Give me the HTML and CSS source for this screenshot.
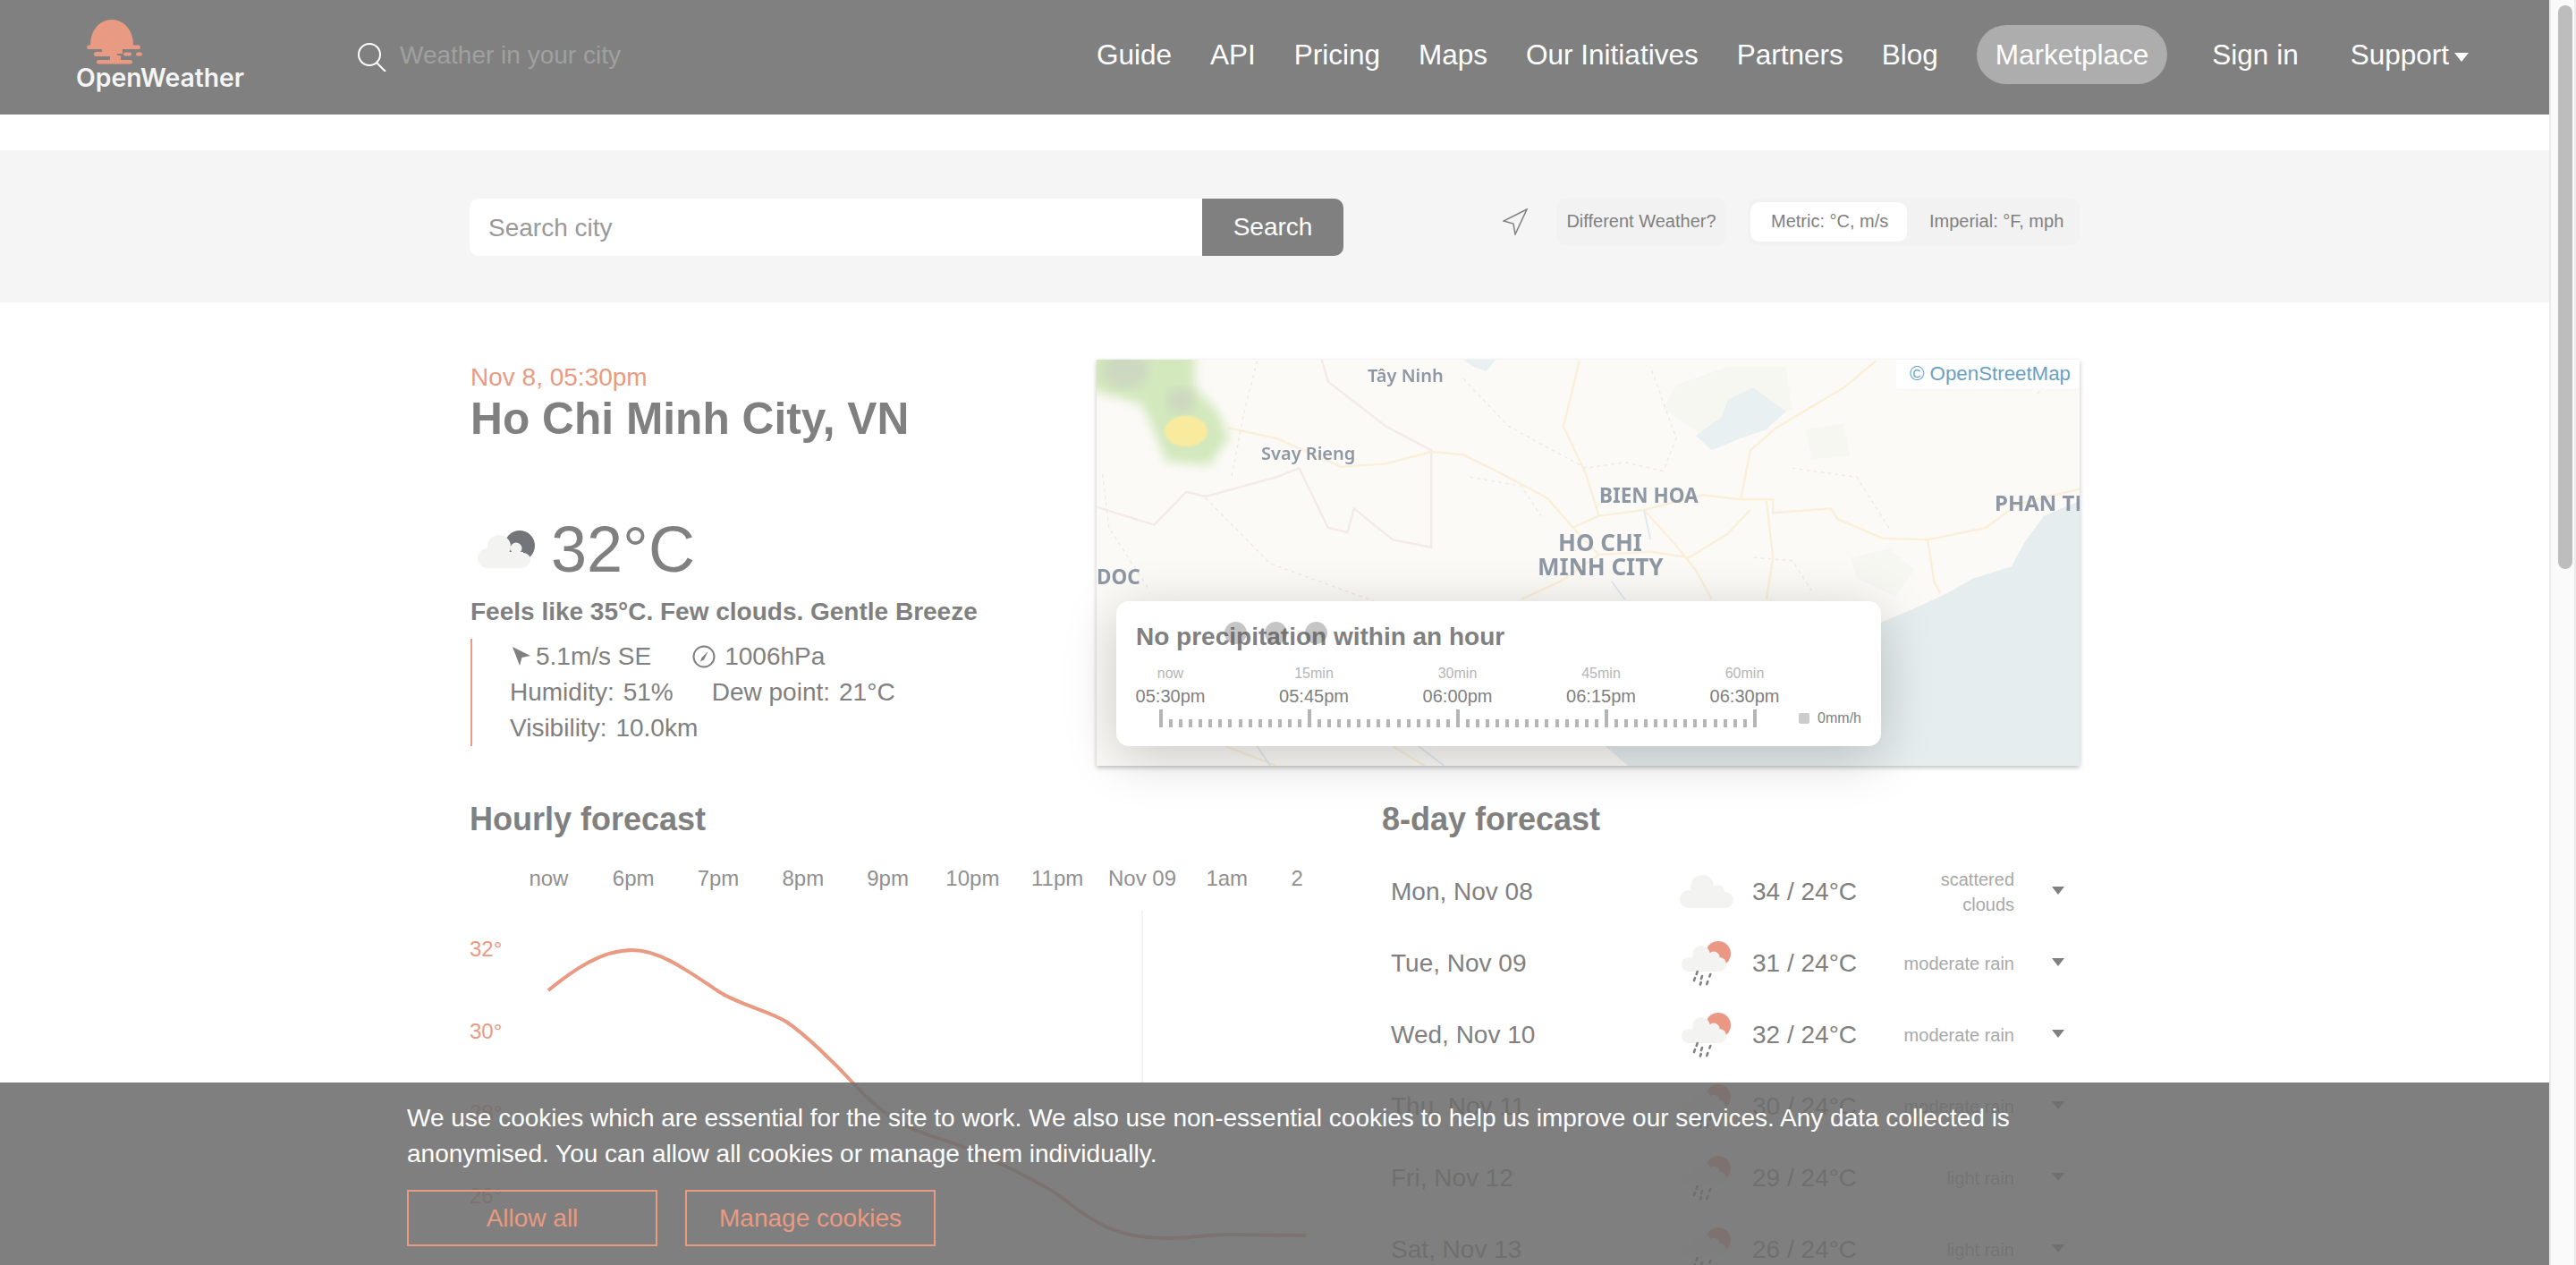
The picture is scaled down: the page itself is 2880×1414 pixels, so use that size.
FILE: index.html
```html
<!DOCTYPE html>
<html lang="en">
<head>
    <meta charset="UTF-8">
    <meta name="viewport" content="width=device-width, initial-scale=1.0">
    <title>OpenWeather</title>
    <link rel="stylesheet" href="styles.css">
</head>
<body>
    <svg class="defs" width="0" height="0">
        <symbol id="icon-rain" viewBox="-2 1 60 50">
            <circle class="sun" cx="41" cy="15" r="14"></circle>
            <g class="cloud">
                <circle cx="22" cy="16" r="10"></circle>
                <circle cx="36" cy="19" r="6.5"></circle>
                <circle cx="8" cy="27" r="8"></circle>
                <circle cx="42" cy="27" r="8"></circle>
                <rect x="8" y="20" width="34" height="15"></rect>
            </g>
            <path class="drops" d="M17.7 35l-1 3M15 42l-1 3M23 40l-1 3M21.7 47l-.8 2.5M32.3 38l-1 2.5M29.3 46l-1 3"></path>
        </symbol>
        <symbol id="icon-cloud" viewBox="0 0 60 50">
            <g class="cloud">
                <circle cx="25" cy="19" r="13"></circle>
                <circle cx="43" cy="24" r="7"></circle>
                <circle cx="10" cy="33" r="10"></circle>
                <circle cx="51" cy="34" r="9"></circle>
                <rect x="10" y="25" width="41" height="18"></rect>
            </g>
        </symbol>
    </svg>

    <div class="page">
        <div class="main">
            <header class="site-header">
                <a class="logo">
                    <svg class="logo-mark" width="64" height="50" viewBox="0 0 64 50">
                        <path d="M4 29C4 12 14 0 28 0C42 0 52 12 52 29Z"></path>
                        <rect x="0" y="28.5" width="60" height="4.5" rx="2.2"></rect>
                        <rect x="17" y="32" width="23" height="6"></rect>
                        <rect x="8" y="36" width="26" height="5" rx="2.5"></rect>
                        <rect x="41" y="36.5" width="9" height="4" rx="2"></rect>
                        <rect x="55" y="36.5" width="7" height="4" rx="2"></rect>
                        <rect x="26" y="40" width="12" height="6"></rect>
                        <rect x="11" y="45" width="40" height="4.5" rx="2.2"></rect>
                    </svg>
                    <span class="logo-text">OpenWeather</span>
                </a>
                <div class="site-search">
                    <svg class="site-search-icon" width="32" height="32" viewBox="0 0 32 32">
                        <circle cx="13" cy="13" r="12"></circle>
                        <path d="M21 22L31 32"></path>
                    </svg>
                    <input class="site-search-input" placeholder="Weather in your city">
                </div>
                <nav class="site-nav">
                    <a>Guide</a>
                    <a>API</a>
                    <a>Pricing</a>
                    <a>Maps</a>
                    <a>Our Initiatives</a>
                    <a>Partners</a>
                    <a>Blog</a>
                    <a class="nav-pill">Marketplace</a>
                    <a class="nav-signin">Sign in</a>
                    <a class="nav-support">Support<span class="nav-caret"></span></a>
                </nav>
            </header>

            <section class="toolbar">
                <div class="wrap toolbar-row">
                    <form class="city-search">
                        <input class="city-input" placeholder="Search city">
                        <button class="city-button" type="button">Search</button>
                    </form>
                    <div class="toolbar-controls">
                        <svg class="locate-icon" width="28" height="30" viewBox="0 0 28 30">
                            <path d="M27 1L1 14L12 17L14 29Z"></path>
                        </svg>
                        <div class="chip">Different Weather?</div>
                        <div class="units">
                            <div class="unit unit-active">Metric: °C, m/s</div>
                            <div class="unit">Imperial: °F, mph</div>
                        </div>
                    </div>
                </div>
            </section>

            <section class="wrap current">
                <div class="current-info">
                    <div class="current-date">Nov 8, 05:30pm</div>
                    <h1 class="current-city">Ho Chi Minh City, VN</h1>
                    <div class="current-temp">
                        <svg width="64" height="42" viewBox="0 0 64 42">
                            <circle class="moon" cx="47" cy="17" r="17"></circle>
                            <g class="cloud">
                                <circle cx="24" cy="18" r="13"></circle>
                                <circle cx="43" cy="20" r="6.5"></circle>
                                <circle cx="11" cy="31" r="11"></circle>
                                <circle cx="51" cy="33" r="8"></circle>
                                <rect x="11" y="24" width="40" height="18"></rect>
                            </g>
                        </svg>
                        <span>32°C</span>
                    </div>
                    <div class="current-summary">Feels like 35°C. Few clouds. Gentle Breeze</div>
                    <div class="current-details">
                        <div class="detail-row">
                            <span class="detail-item">
                                <svg class="wind-icon" width="21" height="22" viewBox="0 0 21 22"><path d="M0 0L20 10L10.5 12L8 21Z"></path></svg>
                                5.1m/s SE
                            </span>
                            <span class="detail-item">
                                <svg class="pressure-icon" width="26" height="26" viewBox="0 0 26 26">
                                    <circle cx="13" cy="13" r="11.5"></circle>
                                    <path d="M17.5 7.5L10.5 14L9 18.5L13 16.5Z"></path>
                                </svg>
                                1006hPa
                            </span>
                        </div>
                        <div class="detail-row detail-row-text">
                            <span><span class="detail-label">Humidity:</span>51%</span>
                            <span><span class="detail-label">Dew point:</span>21°C</span>
                        </div>
                        <div class="detail-row detail-row-text">
                            <span><span class="detail-label">Visibility:</span>10.0km</span>
                        </div>
                    </div>
                </div>

                <div class="map">
                    <svg class="map-canvas" width="1099" height="454" viewBox="0 0 1099 454">
                        <defs>
                            <filter id="soft"><feGaussianBlur stdDeviation="6"></feGaussianBlur></filter>
                            <filter id="soft-small"><feGaussianBlur stdDeviation="1"></feGaussianBlur></filter>
                            <filter id="soft-text"><feGaussianBlur stdDeviation="0.5"></feGaussianBlur></filter>
                        </defs>
                        <rect class="map-land" width="1099" height="454"></rect>
                        <g transform="translate(-15 -12) scale(.7207 .3333)" filter="url(#soft-text)">
                            <path class="map-green" d="M920 120L1000 60L1090 60L1100 200L1040 280L960 290L900 200Z"></path>
                            <path class="map-green" d="M1120 270L1180 250L1190 360L1130 370Z"></path>
                            <path class="map-green" d="M1190 700L1250 670L1290 740L1260 830L1200 770Z"></path>
                            <path class="map-sea" d="M1546 510L1490 560L1460 650L1440 730L1380 770L1340 820L1290 870L1240 915L1000 1200L810 1332L845 1398L1546 1398Z"></path>
                            <path class="map-lake" d="M1000 170L1040 130L1090 210L1060 270L1020 300L975 340L950 290L990 230Z"></path>
                            <path class="map-lake" d="M590 36L640 36L625 75L605 60Z"></path>
                            <path class="map-border" d="M21 530L110 590L160 480L190 495L300 430L335 400L380 600L410 615L420 535L480 640L540 665L540 340L470 260L380 110L370 36"></path>
                            <path class="map-dash" d="M270 40L250 210L230 430M190 500L290 720L450 845M600 430L680 460L710 560M590 100L660 260L780 400L840 380L900 410L920 300L880 60M1100 400L1200 430L1250 600M1040 700L1100 710L1130 810M1480 150L1520 60M30 420L40 600L100 800"></path>
                            <path class="map-road" d="M225 265L300 300L400 395L470 385L540 345L590 355L650 420L720 500L760 600L800 690M770 40L745 260L780 420L800 560L870 540L960 490L1020 505L1070 505L1070 550L1160 535L1170 570L1240 635L1310 640L1400 600L1450 520L1546 470M870 540L920 660L950 740L975 840M1020 505L1035 340L1075 265L1180 130L1230 40M1060 510L1070 700L1060 840M1035 540L1000 620L940 700L880 680L800 690L740 780L680 840M1310 640L1320 780L1330 820M800 560L760 600M480 1332L530 1398M220 1332L300 1398"></path>
                            <path class="map-river" d="M870 540L880 640M820 780L840 840M520 1332L560 1398M270 1332L290 1398"></path>
                        </g>
                        <g>
                            <path class="radar-outer" filter="url(#soft)" d="M-10 -10L110 -10L110 31L136 58L148 88L126 118L78 114L60 71L50 50L-10 33Z"></path>
                            <ellipse class="radar-mid" filter="url(#soft)" cx="32" cy="12" rx="26" ry="20"></ellipse>
                            <ellipse class="radar-mid" filter="url(#soft)" cx="94" cy="46" rx="16" ry="14"></ellipse>
                            <ellipse class="radar-core" filter="url(#soft-small)" cx="100" cy="80" rx="24" ry="17"></ellipse>
                        </g>
                        <g class="map-labels" filter="url(#soft-text)">
                            <text class="map-label-small" x="303" y="25">Tây Ninh</text>
                            <text class="map-label-small" x="184" y="112">Svay Rieng</text>
                            <text class="map-label-mid" x="562" y="160">BIEN HOA</text>
                            <text x="1004" y="169">PHAN TH</text>
                            <text class="map-label-city" x="516" y="214">HO CHI</text>
                            <text class="map-label-city" x="493" y="241">MINH CITY</text>
                            <text class="map-label-mid" x="0" y="251">DOC</text>
                        </g>
                    </svg>
                    <div class="map-credit">© OpenStreetMap</div>
                    <div class="rain-card">
                        <h3 class="rain-title">No precipitation within an hour</h3>
                        <div class="rain-dots"><span></span><span></span><span></span></div>
                        <div class="rain-times">
                            <div class="rain-time"><small>now</small>05:30pm</div>
                            <div class="rain-time"><small>15min</small>05:45pm</div>
                            <div class="rain-time"><small>30min</small>06:00pm</div>
                            <div class="rain-time"><small>45min</small>06:15pm</div>
                            <div class="rain-time"><small>60min</small>06:30pm</div>
                        </div>
                        <div class="rain-bottom">
                            <div class="rain-ticks">
                                <i class="big"></i><i></i><i></i><i></i><i></i><i></i><i></i><i></i><i></i><i></i><i></i><i></i><i></i><i></i><i></i>
                                <i class="big"></i><i></i><i></i><i></i><i></i><i></i><i></i><i></i><i></i><i></i><i></i><i></i><i></i><i></i><i></i>
                                <i class="big"></i><i></i><i></i><i></i><i></i><i></i><i></i><i></i><i></i><i></i><i></i><i></i><i></i><i></i><i></i>
                                <i class="big"></i><i></i><i></i><i></i><i></i><i></i><i></i><i></i><i></i><i></i><i></i><i></i><i></i><i></i><i></i>
                                <i class="big"></i>
                            </div>
                            <div class="rain-legend"><span class="rain-swatch"></span>0mm/h</div>
                        </div>
                    </div>
                </div>
            </section>

            <section class="wrap forecasts">
                <div class="hourly">
                    <h2 class="section-title">Hourly forecast</h2>
                    <div class="hours">
                        <span>now</span><span>6pm</span><span>7pm</span><span>8pm</span><span>9pm</span><span>10pm</span><span>11pm</span><span>Nov 09</span><span>1am</span><span class="hours-last">2</span>
                    </div>
                    <svg class="chart" width="976" height="400" viewBox="525 995 976 400">
                        <path class="chart-grid" d="M1277 1016V1395"></path>
                        <text x="525" y="1068">32°</text>
                        <text x="525" y="1160">30°</text>
                        <text x="525" y="1251">28°</text>
                        <text x="525" y="1344">26°</text>
                        <path class="chart-line" d="M613 1106C640 1084 672 1061 707 1061C738 1061 770 1085 803 1107C828 1123 858 1128 879 1141C900 1155 932 1186 956 1212C975 1233 995 1250 1023 1262C1045 1271 1065 1275 1087 1285C1120 1300 1150 1315 1176 1330C1205 1348 1230 1383 1303 1383C1330 1383 1350 1379 1374 1379L1460 1380"></path>
                    </svg>
                </div>
                <div class="daily">
                    <h2 class="section-title">8-day forecast</h2>
                    <ul class="day-list">
                        <li class="day">
                            <span>Mon, Nov 08</span>
                            <svg width="60" height="50"><use href="#icon-cloud"></use></svg>
                            <span class="day-temp">34 / 24°C</span>
                            <span class="day-desc">scattered clouds</span>
                            <span class="day-caret"></span>
                        </li>
                        <li class="day">
                            <span>Tue, Nov 09</span>
                            <svg width="60" height="50"><use href="#icon-rain"></use></svg>
                            <span class="day-temp">31 / 24°C</span>
                            <span class="day-desc">moderate rain</span>
                            <span class="day-caret"></span>
                        </li>
                        <li class="day">
                            <span>Wed, Nov 10</span>
                            <svg width="60" height="50"><use href="#icon-rain"></use></svg>
                            <span class="day-temp">32 / 24°C</span>
                            <span class="day-desc">moderate rain</span>
                            <span class="day-caret"></span>
                        </li>
                        <li class="day">
                            <span>Thu, Nov 11</span>
                            <svg width="60" height="50"><use href="#icon-rain"></use></svg>
                            <span class="day-temp">30 / 24°C</span>
                            <span class="day-desc">moderate rain</span>
                            <span class="day-caret"></span>
                        </li>
                        <li class="day">
                            <span>Fri, Nov 12</span>
                            <svg width="60" height="50"><use href="#icon-rain"></use></svg>
                            <span class="day-temp">29 / 24°C</span>
                            <span class="day-desc">light rain</span>
                            <span class="day-caret"></span>
                        </li>
                        <li class="day">
                            <span>Sat, Nov 13</span>
                            <svg width="60" height="50"><use href="#icon-rain"></use></svg>
                            <span class="day-temp">26 / 24°C</span>
                            <span class="day-desc">light rain</span>
                            <span class="day-caret"></span>
                        </li>
                    </ul>
                </div>
            </section>

            <div class="cookies">
                <p class="cookies-text">We use cookies which are essential for the site to work. We also use non-essential cookies to help us improve our services. Any data collected is anonymised. You can allow all cookies or manage them individually.</p>
                <div class="cookies-actions">
                    <button class="cookies-button" type="button">Allow all</button>
                    <button class="cookies-button" type="button">Manage cookies</button>
                </div>
            </div>
        </div>

        <div class="scrollbar"><div class="scrollbar-thumb"></div></div>
    </div>
</body>
</html>
```

FILE: styles.css
```css
* {
    box-sizing: border-box;
}
html, body {
    margin: 0;
    height: 100%;
    overflow: hidden;
}
body {
    font-family: "Liberation Sans", Arial, sans-serif;
    color: #808080;
    background: #fff;
}
input, button {
    font-family: inherit;
}
.defs {
    position: absolute;
}
.page {
    display: flex;
    height: 100vh;
}
.main {
    position: relative;
    flex: 1;
    min-width: 0;
    overflow: hidden;
}
.wrap {
    width: 1800px;
    margin: 0 auto;
}

/* scrollbar */
.scrollbar {
    flex: none;
    width: 30px;
    padding: 6px 6px 0 8px;
    background: #fafafa;
    border-left: 2px solid #ebebeb;
    border-right: 2px solid #ebebeb;
}
.scrollbar-thumb {
    width: 16px;
    height: 630px;
    background: #bdbdbd;
    border-radius: 8px;
}

/* header */
.site-header {
    display: flex;
    align-items: flex-start;
    height: 128px;
    padding: 22px 90px 0 85px;
    background: #808080;
    color: #fff;
}
.logo {
    display: flex;
    flex-direction: column;
    width: 186px;
}
.logo-mark {
    margin-left: 12px;
    fill: #e99a82;
}
.logo-text {
    margin-top: -2px;
    font-family: Inter, "Noto Sans", sans-serif;
    font-size: 28.3px;
    font-weight: 600;
    line-height: 34px;
    color: #f5f5f5;
    white-space: nowrap;
}
.site-search {
    display: flex;
    align-items: flex-start;
    gap: 15px;
    margin: 26px 0 0 129px;
}
.site-search-icon {
    fill: none;
    stroke: #fff;
    stroke-width: 2;
}
.site-search-input {
    width: 300px;
    height: 40px;
    margin-top: -6px;
    padding: 0;
    border: 0;
    background: none;
    font-size: 28px;
}
.site-search-input::placeholder {
    color: #a0a0a0;
}
.site-nav {
    display: flex;
    gap: 43px;
    margin-left: auto;
    margin-top: 6px;
    font-size: 31.5px;
    line-height: 66px;
    white-space: nowrap;
}
.nav-pill {
    margin: 0 7px 0 0;
    padding: 0 21px;
    background: #adadad;
    border-radius: 33px;
}
.nav-support {
    display: flex;
    align-items: center;
    margin-left: 15px;
}
.nav-caret {
    width: 0;
    height: 0;
    margin: 6px 0 0 6px;
    border-left: 8px solid transparent;
    border-right: 8px solid transparent;
    border-top: 10px solid #fff;
}

/* search band */
.toolbar {
    height: 170px;
    margin-top: 40px;
    padding-top: 54px;
    background: #f5f5f5;
}
.toolbar-row {
    display: flex;
    justify-content: space-between;
}
.city-search {
    display: flex;
    width: 977px;
    height: 64px;
}
.city-input {
    flex: 1;
    min-width: 0;
    padding: 1px 21px 0;
    border: 0;
    border-radius: 10px 0 0 10px;
    background: #fff;
    font-size: 28px;
}
.city-input::placeholder {
    color: #999;
}
.city-button {
    width: 158px;
    border: 0;
    border-radius: 0 10px 10px 0;
    background: #808080;
    color: #fff;
    font-size: 28px;
}
.toolbar-controls {
    display: flex;
    align-items: flex-start;
    font-size: 20px;
}
.locate-icon {
    margin: 11px 32px 0 0;
    fill: none;
    stroke: #808080;
    stroke-width: 1.5;
}
.chip {
    width: 190px;
    height: 52px;
    margin-right: 24px;
    background: #f2f2f2;
    border-radius: 10px;
    line-height: 50px;
    text-align: center;
}
.units {
    display: flex;
    width: 371px;
    height: 52px;
    padding: 4px 3px;
    background: #f2f2f2;
    border-radius: 10px;
}
.unit {
    flex: 1;
    padding-left: 23px;
    line-height: 42px;
    white-space: nowrap;
}
.unit-active {
    flex: none;
    width: 175px;
    background: #fff;
    border-radius: 10px;
}
.unit-active + .unit {
    padding-left: 25px;
}

/* current weather */
.current {
    display: flex;
    justify-content: space-between;
    padding-top: 64px;
}
.current-info {
    width: 699px;
    padding: 4px 0 0 1px;
}
.current-date {
    font-size: 28px;
    line-height: 32px;
    color: #e99a82;
}
.current-city {
    margin: 2px 0 78px;
    font-size: 49.7px;
    line-height: 56px;
}
.current-temp {
    display: flex;
    align-items: center;
    gap: 18px;
    padding-left: 8px;
    font-size: 72px;
    line-height: 80px;
}
.moon {
    fill: #74757a;
}
.cloud {
    fill: #f3f3f2;
}
.sun {
    fill: #ea9784;
}
.drops {
    fill: none;
    stroke: #808080;
    stroke-width: 2.5;
    stroke-linecap: round;
}
.current-summary {
    margin: 14px 0;
    font-size: 28px;
    font-weight: bold;
    line-height: 32px;
}
.current-details {
    padding-left: 42px;
    border-left: 2px solid #e99a82;
    font-size: 28px;
    line-height: 40px;
}
.detail-row {
    display: flex;
    gap: 46px;
    padding-left: 3px;
}
.detail-row-text {
    gap: 43px;
    padding-left: 0;
}
.detail-item {
    display: flex;
    align-items: center;
}
.wind-icon {
    margin-right: 5px;
    fill: #808080;
}
.pressure-icon {
    margin-right: 10px;
}
.pressure-icon circle {
    fill: none;
    stroke: #808080;
    stroke-width: 2;
}
.pressure-icon path {
    fill: #808080;
}
.detail-label {
    margin-right: 10px;
}

/* map */
.map {
    position: relative;
    flex: none;
    width: 1099px;
    height: 454px;
    box-shadow: 0 2px 5px rgba(0, 0, 0, 0.25);
}
.map-canvas {
    display: block;
}
.map-land {
    fill: #fcfaf7;
}
.map-sea {
    fill: #e6edef;
}
.map-lake {
    fill: #e9f0f2;
}
.map-green {
    fill: #f7f7f2;
}
.map-road, .map-border, .map-dash, .map-river {
    fill: none;
    vector-effect: non-scaling-stroke;
}
.map-road {
    stroke: #faf0da;
    stroke-width: 2.5;
}
.map-border {
    stroke: #f3ebe9;
    stroke-width: 2.5;
}
.map-dash {
    stroke: #eeeae7;
    stroke-width: 1.5;
    stroke-dasharray: 4 4;
}
.map-river {
    stroke: #e0eaee;
    stroke-width: 2;
}
.radar-outer {
    fill: #d3e8bd;
}
.radar-mid {
    fill: #cdd8c0;
}
.radar-core {
    fill: #f9eb9e;
}
.map-labels text {
    font-family: "Noto Sans", sans-serif;
    font-size: 24px;
    font-weight: 700;
    fill: #8d98a4;
}
.map-labels .map-label-small {
    font-size: 20px;
    font-weight: 600;
}
.map-labels .map-label-mid {
    font-size: 22.5px;
}
.map-labels .map-label-city {
    font-size: 26px;
}
.map-credit {
    position: absolute;
    top: 0;
    right: 0;
    padding: 0 10px 0 15px;
    background: #fff;
    color: #6a9fc4;
    font-size: 22.3px;
    line-height: 32px;
}

/* rain card */
.rain-card {
    position: absolute;
    left: 22px;
    top: 270px;
    width: 855px;
    height: 162px;
    padding: 24px 22px 0;
    background: #fff;
    border-radius: 14px;
    box-shadow: 0 12px 60px rgba(0, 0, 0, 0.2);
}
.rain-title {
    margin: 0 0 15px;
    font-size: 28px;
    line-height: 32px;
}
.rain-dots {
    position: absolute;
    left: 121px;
    top: 23px;
    display: flex;
    gap: 20px;
}
.rain-dots span {
    width: 25px;
    height: 25px;
    background: rgba(90, 90, 90, 0.35);
    border-radius: 50%;
}
.rain-times {
    display: flex;
    gap: 83.5px;
}
.rain-time {
    display: flex;
    flex-direction: column;
    align-items: center;
    width: 77px;
    font-size: 20px;
    line-height: 24px;
    white-space: nowrap;
}
.rain-time small {
    font-size: 16px;
    line-height: 20px;
    color: #b5b5b5;
    margin-bottom: 3px;
}
.rain-bottom {
    display: flex;
    align-items: center;
    margin-top: 3px;
    padding-left: 26px;
}
.rain-ticks {
    display: flex;
    align-items: flex-end;
    justify-content: space-between;
    width: 668px;
    height: 20px;
}
.rain-ticks i {
    width: 4px;
    height: 9px;
    background: #b5b5b5;
}
.rain-ticks .big {
    height: 20px;
}
.rain-legend {
    display: flex;
    align-items: center;
    gap: 9px;
    margin-left: auto;
    font-size: 16px;
    white-space: nowrap;
}
.rain-swatch {
    width: 12px;
    height: 12px;
    background: #ccc;
    border-radius: 2px;
}

/* forecasts */
.forecasts {
    display: flex;
    justify-content: space-between;
    padding-top: 40px;
}
.hourly {
    width: 977px;
}
.daily {
    width: 780px;
}
.section-title {
    margin: 0;
    font-size: 36px;
    line-height: 40px;
}
.hours {
    display: flex;
    margin-top: 32px;
    padding-left: 41px;
    font-size: 24px;
    line-height: 28px;
    color: #909090;
    white-space: nowrap;
}
.hours span {
    width: 94.8px;
    text-align: center;
}
.hours .hours-last {
    width: 62px;
}
.chart {
    display: block;
}
.chart text {
    font-size: 24px;
    fill: #e99a82;
}
.chart-grid {
    stroke: #f2f2f2;
    stroke-width: 2;
}
.chart-line {
    fill: none;
    stroke: #e99a82;
    stroke-width: 4;
}
.day-list {
    margin: 21px 0 0;
    padding: 0 0 0 10px;
    list-style: none;
}
.day {
    display: grid;
    grid-template-columns: 323px 60px 184px 130px 15px;
    align-items: center;
    height: 80px;
    font-size: 28px;
}
.day-temp {
    padding-left: 21px;
}
.day-temp, .day span {
    white-space: nowrap;
}
.day .day-desc {
    font-size: 20px;
    line-height: 28px;
    color: #a8a8a8;
    text-align: right;
    white-space: normal;
}
.day-caret {
    width: 0;
    height: 0;
    margin: -4px 0 0 42px;
    border-left: 7.5px solid transparent;
    border-right: 7.5px solid transparent;
    border-top: 9px solid #808080;
}

/* cookie banner */
.cookies {
    position: absolute;
    left: 0;
    right: 0;
    top: 1210px;
    bottom: 0;
    padding: 20px 0 0 455px;
    background: rgba(108, 108, 108, 0.87);
    color: #fff;
    font-size: 28px;
    line-height: 40px;
}
.cookies-text {
    width: 1800px;
    margin: 0 0 20px;
}
.cookies-actions {
    display: flex;
    gap: 31px;
}
.cookies-button {
    width: 280px;
    height: 63px;
    padding: 0;
    background: none;
    border: 2px solid #e99a82;
    color: #e99a82;
    font-size: 28px;
}
```
